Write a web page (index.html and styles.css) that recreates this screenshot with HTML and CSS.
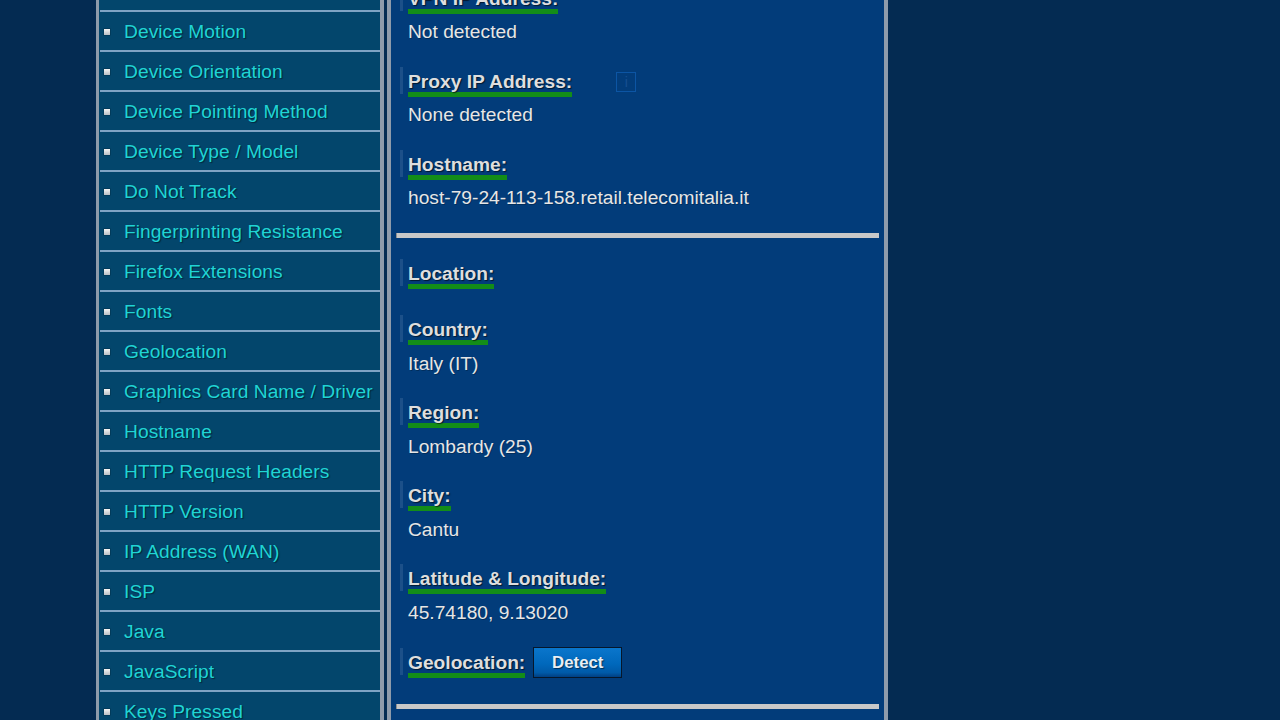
FILE: index.html
```html
<!DOCTYPE html>
<html lang="en">
<head>
<meta charset="utf-8">
<title>Browser info</title>
<link rel="stylesheet" href="styles.css">
</head>
<body>
<div class="layout">
  <nav class="sidebar">
    <ul class="menu">
      <li>CPU Cores</li>
      <li>Device Motion</li>
      <li>Device Orientation</li>
      <li>Device Pointing Method</li>
      <li>Device Type / Model</li>
      <li>Do Not Track</li>
      <li>Fingerprinting Resistance</li>
      <li>Firefox Extensions</li>
      <li>Fonts</li>
      <li>Geolocation</li>
      <li>Graphics Card Name / Driver</li>
      <li>Hostname</li>
      <li>HTTP Request Headers</li>
      <li>HTTP Version</li>
      <li>IP Address (WAN)</li>
      <li>ISP</li>
      <li>Java</li>
      <li>JavaScript</li>
      <li>Keys Pressed</li>
    </ul>
  </nav>
  <main class="panel">
    <section class="item">
      <div class="label"><span class="name">VPN IP Address:</span></div>
      <div class="value">Not detected</div>
    </section>
    <section class="item">
      <div class="label"><span class="name">Proxy IP Address:</span><span class="info">i</span></div>
      <div class="value">None detected</div>
    </section>
    <section class="item">
      <div class="label"><span class="name">Hostname:</span></div>
      <div class="value">host-79-24-113-158.retail.telecomitalia.it</div>
    </section>
    <hr class="rule">
    <div class="group">
      <section class="item only">
        <div class="label"><span class="name">Location:</span></div>
      </section>
      <section class="item">
        <div class="label"><span class="name">Country:</span></div>
        <div class="value">Italy (IT)</div>
      </section>
      <section class="item">
        <div class="label"><span class="name">Region:</span></div>
        <div class="value">Lombardy (25)</div>
      </section>
      <section class="item">
        <div class="label"><span class="name">City:</span></div>
        <div class="value">Cantu</div>
      </section>
      <section class="item last">
        <div class="label"><span class="name">Latitude &amp; Longitude:</span></div>
        <div class="value">45.74180, 9.13020</div>
      </section>
      <section class="item only">
        <div class="label"><span class="name">Geolocation:</span><button class="detect" type="button">Detect</button></div>
      </section>
    </div>
    <hr class="rule">
  </main>
</div>
</body>
</html>
```

FILE: styles.css
```css
html, body {
  margin: 0;
  padding: 0;
}
body {
  background: #042b52;
  font-family: "Liberation Sans", Arial, sans-serif;
  font-size: 19.2px;
  height: 720px;
  overflow: hidden;
}
.layout {
  display: flex;
  align-items: flex-start;
  gap: 3px;
  margin-left: 96px;
}
.sidebar {
  box-sizing: border-box;
  width: 288px;
  margin-top: -28px;
  background: #03466c;
  border-left: 3px solid #8e9bab;
  border-right: 4px solid #8e9bab;
  padding-left: 1px;
}
.menu {
  list-style: none;
  margin: 0;
  padding: 0;
}
.menu li {
  display: flex;
  align-items: center;
  gap: 14px;
  height: 36px;
  padding: 2px 0 0 4px;
  border-bottom: 2px solid #7fa4c4;
  color: #20d4d4;
  letter-spacing: 0.05px;
  text-shadow: 1px 1px 1px rgba(0, 0, 0, 0.45);
  white-space: nowrap;
}
.menu li:first-child {
  color: transparent;
  text-shadow: none;
}
.menu li::before {
  content: "";
  width: 6px;
  height: 6px;
  flex: none;
  margin-top: -1px;
  background: linear-gradient(#f4f4f4, #b9bec4);
  box-shadow: 0 0 0 0.5px rgba(0, 0, 0, 0.3);
}
.panel {
  box-sizing: border-box;
  width: 501px;
  margin-top: -16px;
  background: #023c7a;
  border-left: 4px solid #8e9bab;
  border-right: 4px solid #8e9bab;
  padding: 0 5px 40px 5px;
}
.item {
  margin-bottom: 24px;
  padding-left: 4px;
}
.item.only {
  margin-bottom: 29px;
}
.group .item {
  margin-bottom: 23px;
}
.group .item.last {
  margin-bottom: 24px;
}
.group .item.only {
  margin-bottom: 29px;
}
.label {
  border-left: 3px solid #1c5089;
  padding: 4px 0 1px 5px;
  line-height: 22px;
  height: 22px;
  white-space: nowrap;
}
.name {
  font-weight: bold;
  color: #dedede;
  border-bottom: 5px solid #138d18;
  text-shadow: 1px 1px 1px rgba(0, 0, 0, 0.6);
}
.value {
  margin-top: 10px;
  padding-left: 8px;
  line-height: 22px;
  color: #e6e6e6;
  text-shadow: 1px 1px 0 rgba(0, 0, 0, 0.25);
  white-space: nowrap;
}
.group .value {
  margin-top: 11px;
}
.info {
  display: inline-block;
  box-sizing: border-box;
  width: 20px;
  height: 20px;
  margin: -5px 0 -3px 44px;
  vertical-align: middle;
  border: 1px solid #0c55a4;
  color: #174f91;
  font-size: 14px;
  line-height: 18px;
  text-align: center;
}
.detect {
  display: inline-block;
  box-sizing: border-box;
  width: 89px;
  height: 31px;
  margin: -6px 0 -4px 8px;
  vertical-align: middle;
  padding: 0;
  border: 1px solid #06172b;
  background: linear-gradient(#0a76cc 0%, #0068bc 55%, #005aa8 85%, #003f82 100%);
  color: #e9eef4;
  font-family: "Liberation Sans", Arial, sans-serif;
  font-size: 16.8px;
  font-weight: bold;
  text-shadow: 1px 1px 1px rgba(0, 0, 0, 0.5);
  cursor: pointer;
}
.rule {
  margin: 0 0 21px 0;
  height: 5px;
  border: 0;
  border-left: 1px solid #8f8f8f;
  background: #c8c8c8;
}
```
